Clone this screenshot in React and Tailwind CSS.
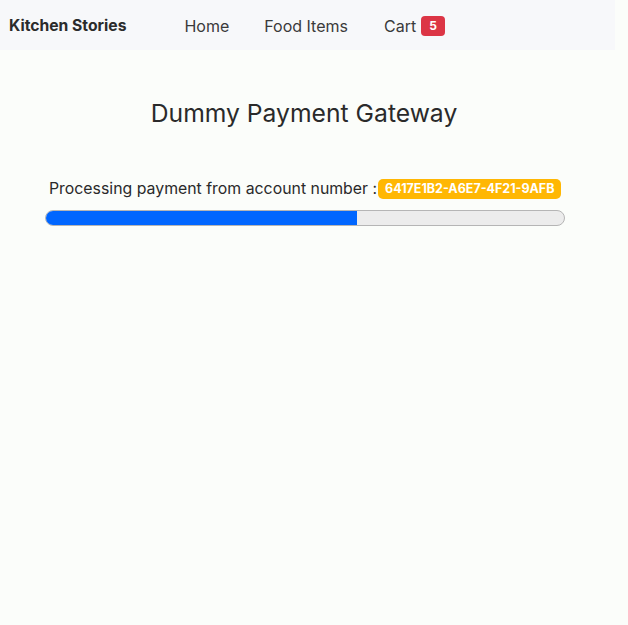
import React from 'react';

export default function App() {
  const accountNo = '6417E1B2-A6E7-4F21-9AFB';
  const progress = 60;

  return (
    <div className="min-h-[625px] w-full bg-[#fbfdfa] font-['Inter','Noto_Sans',sans-serif] text-[#212529]">
      <div className="w-[615px]">
        {/* Navbar */}
        <nav className="flex h-[50px] items-center bg-[#f7f8fa] pl-[9px] pt-[1px]">
          <span className="text-[15.7px] font-bold text-[#2b2b2b]">Kitchen Stories</span>
          <div className="ml-[58px] flex items-center text-[16px] text-[#3a3a3a]">
            <span>Home</span>
            <span className="ml-[35px]">Food Items</span>
            <span className="ml-[36px] flex items-center">
              Cart
              <span className="ml-[5px] flex h-[20px] items-center rounded-[4px] bg-[#dc3545] px-[8px] text-[12px] font-bold text-white">
                5
              </span>
            </span>
          </div>
        </nav>

        {/* Content */}
        <div className="px-[45px] pt-[45px]">
          <h1 className="pr-[7px] text-center text-[24.7px] text-[#2a2a2a]">Dummy Payment Gateway</h1>

          <div className="mt-[45px] flex items-center pl-[4px] text-[15.85px] text-[#2a2a2a]">
            <span>Processing payment from account number :</span>
            <span className="ml-[1px] flex h-[20px] items-center rounded-[5px] bg-[#ffb703] px-[7px] text-[12.5px] font-bold text-white">
              {accountNo}
            </span>
          </div>

          <div className="mt-[9px] h-[16px] w-[520px] overflow-hidden rounded-full border border-[#b5b5b5] bg-[#ececec]">
            <div className="h-full bg-[#0066ff]" style={{ width: `${progress}%` }} />
          </div>
        </div>
      </div>
    </div>
  );
}
